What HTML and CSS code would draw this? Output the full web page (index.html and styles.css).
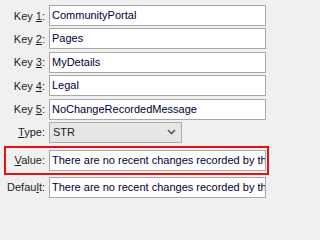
FILE: index.html
```html
<!DOCTYPE html>
<html>
<head>
<meta charset="utf-8">
<link rel="stylesheet" href="styles.css">
</head>
<body>
<div class="form">
  <div class="row">
    <label class="lbl">Key <u>1</u>:</label>
    <div class="field">CommunityPortal</div>
  </div>
  <div class="row">
    <label class="lbl">Key <u>2</u>:</label>
    <div class="field">Pages</div>
  </div>
  <div class="row">
    <label class="lbl">Key <u>3</u>:</label>
    <div class="field">MyDetails</div>
  </div>
  <div class="row">
    <label class="lbl">Key <u>4</u>:</label>
    <div class="field">Legal</div>
  </div>
  <div class="row">
    <label class="lbl">Key <u>5</u>:</label>
    <div class="field">NoChangeRecordedMessage</div>
  </div>
  <div class="row">
    <label class="lbl"><u>T</u>ype:</label>
    <div class="combo">
      <span class="combo-text">STR</span>
      <svg class="chev" width="9" height="6" viewBox="0 0 9 6"><path d="M1 1 L4.5 4.5 L8 1" fill="none" stroke="#5a5a5a" stroke-width="1.6"/></svg>
    </div>
  </div>
  <div class="row highlight">
    <label class="lbl"><u>V</u>alue:</label>
    <div class="field">There are no recent changes recorded by this user</div>
  </div>
  <div class="row">
    <label class="lbl">Defau<u>l</u>t:</label>
    <div class="field">There are no recent changes recorded by this user</div>
  </div>
</div>
</body>
</html>
```

FILE: styles.css
```css
html, body {
  margin: 0;
  padding: 0;
  background: #f0f0f0;
}
body {
  font-family: "Liberation Sans", Arial, sans-serif;
  font-size: 11px;
  color: #1e1e1e;
}
.form {
  display: flex;
  flex-direction: column;
  align-items: flex-start;
  gap: 2.4px;
  padding-top: 5px;
}
.row {
  display: grid;
  grid-template-columns: 49px 217px;
  height: 21px;
  align-items: center;
}
.lbl {
  text-align: right;
  padding-right: 4px;
  white-space: nowrap;
}
.lbl u {
  text-underline-offset: 1px;
}
.field {
  box-sizing: border-box;
  height: 21px;
  border: 1px solid #a8a8a8;
  background: #ffffff;
  color: #00003a;
  padding-left: 2px;
  line-height: 19px;
  white-space: nowrap;
  overflow: hidden;
}
.combo {
  box-sizing: border-box;
  width: 133px;
  height: 21px;
  border: 1px solid #acacac;
  background: #e6e6e6;
  display: flex;
  align-items: center;
  justify-content: space-between;
  padding: 0 5px 0 3px;
  color: #1e1e1e;
}
.chev {
  display: block;
}
.highlight {
  margin-top: 0.6px;
  margin-left: 4px;
  border: 2px solid #e81010;
  padding: 2px 1px 2px 0;
  height: 21px;
  grid-template-columns: 43px 217px;
  margin-bottom: -0.4px;
}
```
